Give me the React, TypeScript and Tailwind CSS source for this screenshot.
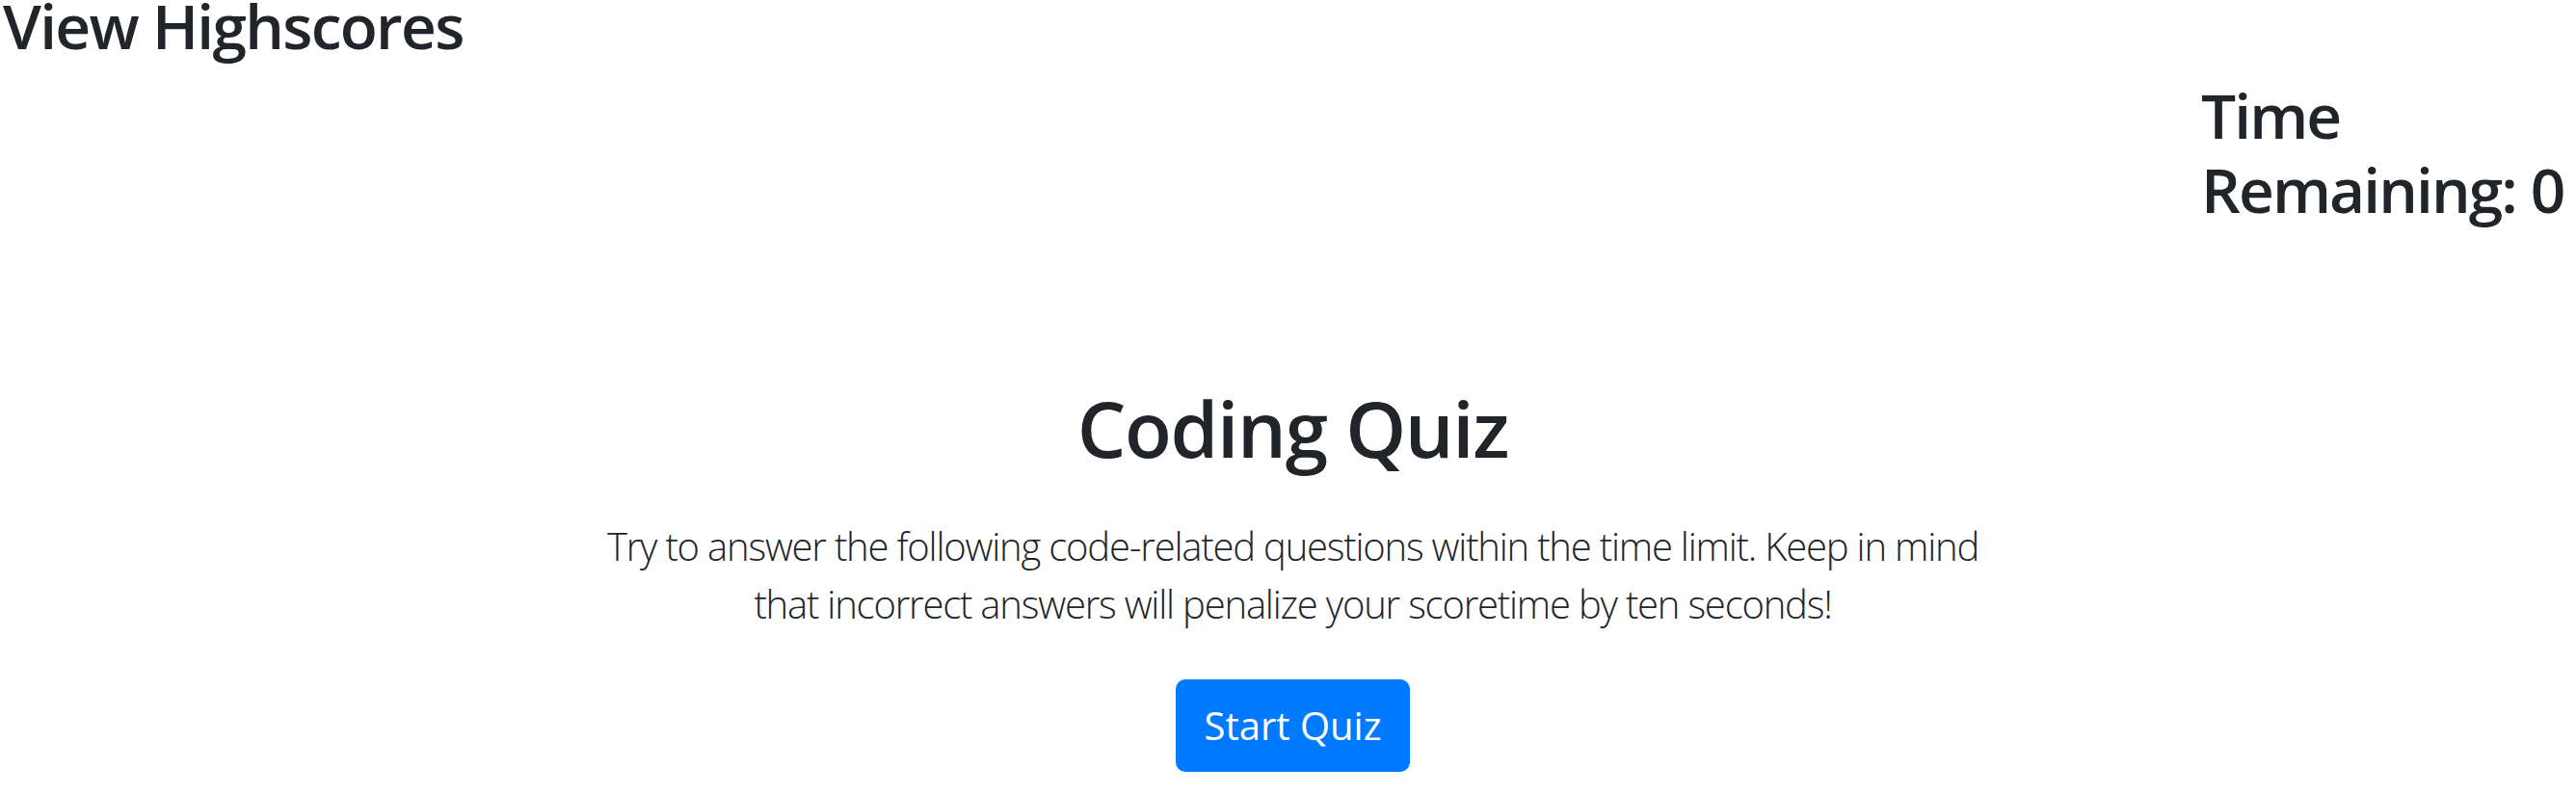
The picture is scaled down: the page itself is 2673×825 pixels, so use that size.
import React from "react";

export default function App() {
  return (
    <div
      className="min-h-[825px] w-full bg-white text-[#212529] overflow-hidden"
      style={{ fontFamily: '"Open Sans", "Noto Sans", "Liberation Sans", sans-serif' }}
    >
      <header>
        <h2 className="m-0 pl-[3px] text-[64px] leading-[54px] font-semibold tracking-[-1.7px]">
          View Highscores
        </h2>
      </header>
      <div className="mt-[28px] flex justify-end">
        <h2 className="m-0 w-[389px] text-left text-[64px] leading-[76.8px] font-semibold tracking-[-1.9px]">
          Time Remaining: 0
        </h2>
      </div>
      <main className="mt-[160px] flex flex-col items-center pl-[10px] text-center">
        <h1 className="m-0 text-[80px] leading-[96px] font-semibold tracking-[-1.3px]">Coding Quiz</h1>
        <p className="m-0 mt-[45px] text-[40px] leading-[60px] font-light tracking-[-1.2px]">
          Try to answer the following code-related questions within the time limit. Keep in mind
          <br />
          that incorrect answers will penalize your scoretime by ten seconds!
        </p>
        <button
          type="button"
          className="mt-[48px] rounded-[10px] border-2 border-[#007bff] bg-[#007bff] px-[28px] py-[16px] text-[40px] leading-[60px] font-normal text-white"
        >
          Start Quiz
        </button>
      </main>
    </div>
  );
}
